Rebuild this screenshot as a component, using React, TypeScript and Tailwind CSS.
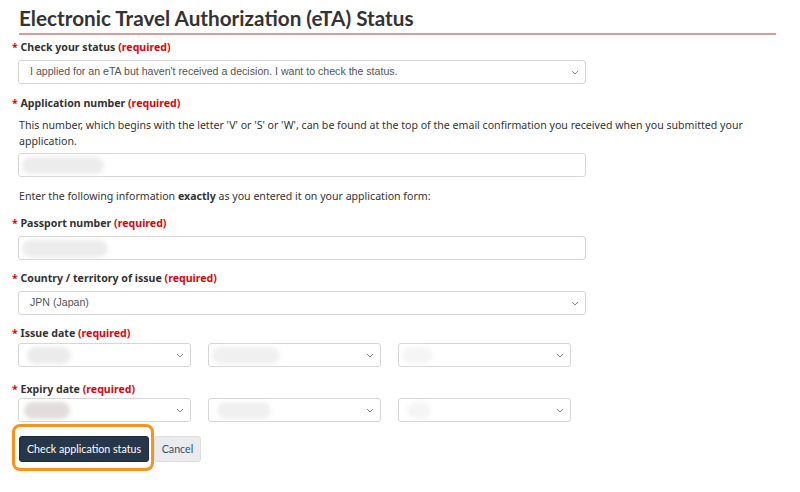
import React from 'react'

const Chevron = () => (
  <svg width="8" height="5" viewBox="0 0 8 5" className="shrink-0">
    <polyline points="1,1 4,4 7,1" fill="none" stroke="#8a8a8a" strokeWidth="1" />
  </svg>
)

function Label({ children }: { children: React.ReactNode }) {
  return (
    <div className="h-[18px] leading-[18px] text-[10.6px] font-bold text-[#333]">
      <span className="text-[#d3080c]">*</span> {children}{' '}
      <span className="text-[#d3080c]">(required)</span>
    </div>
  )
}

function Blur({ w, tone, ml = 'ml-[4px]' }: { w: string; tone: string; ml?: string }) {
  return <div className={`${ml} ${w} ${tone} h-[17px] rounded-full blur-[2px]`} />
}

function Select({ width, children }: { width: string; children?: React.ReactNode }) {
  return (
    <div
      className={`${width} h-[24px] flex items-center justify-between border border-[#d6d6d6] rounded-[3px] bg-white pr-[6px]`}
      style={{ fontFamily: '"Liberation Sans", Arial, sans-serif' }}
    >
      <div className="flex items-center text-[10.6px] text-[#555]">{children}</div>
      <Chevron />
    </div>
  )
}

export default function App() {
  return (
    <div
      className="w-[800px] h-[492px] bg-white pl-[12px] pr-[24px] text-[#333]"
      style={{ fontFamily: '"Noto Sans", "Open Sans", sans-serif' }}
    >
      <h1
        className="ml-[7px] pt-[3px] pb-[1px] h-[35px] leading-[30px] text-[20.7px] font-bold text-[#333] border-b-2 border-[#dc9a9e]"
        style={{ fontFamily: 'Lato, sans-serif' }}
      >
        Electronic Travel Authorization (eTA) Status
      </h1>

      <div className="mt-[3px]">
        <Label>Check your status</Label>
      </div>
      <div className="mt-[4px] ml-[6px]">
        <Select width="w-[568px]">
          <span className="pl-[11px]">I applied for an eTA but haven't received a decision. I want to check the status.</span>
        </Select>
      </div>

      <div className="mt-[10px]">
        <Label>Application number</Label>
      </div>
      <p className="mt-[5px] ml-[7px] text-[10.6px] leading-[16px] text-[#333]">
        This number, which begins with the letter 'V' or 'S' or 'W', can be found at the top of the email confirmation you received when you submitted your application.
      </p>
      <div className="mt-[4px] ml-[6px] w-[568px] h-[24px] flex items-center border border-[#d6d6d6] rounded-[3px]">
        <Blur w="w-[82px]" tone="bg-[#ececec]" ml="ml-[3px]" />
      </div>

      <p className="mt-[11px] ml-[7px] text-[10.6px] leading-[16px]">
        Enter the following information <b>exactly</b> as you entered it on your application form:
      </p>

      <div className="mt-[10px]">
        <Label>Passport number</Label>
      </div>
      <div className="mt-[4px] ml-[6px] w-[568px] h-[24px] flex items-center border border-[#d6d6d6] rounded-[3px]">
        <Blur w="w-[86px]" tone="bg-[#ececec]" ml="ml-[3px]" />
      </div>

      <div className="mt-[9px]">
        <Label>Country / territory of issue</Label>
      </div>
      <div className="mt-[4px] ml-[6px]">
        <Select width="w-[568px]">
          <span className="pl-[11px]">JPN (Japan)</span>
        </Select>
      </div>

      <div className="mt-[9px]">
        <Label>Issue date</Label>
      </div>
      <div className="mt-[1px] ml-[6px] flex gap-[17px]">
        <Select width="w-[173px]">
          <Blur w="w-[44px]" tone="bg-[#ebebeb]" ml="ml-[8px]" />
        </Select>
        <Select width="w-[173px]">
          <Blur w="w-[68px]" tone="bg-[#f0f0f0]" ml="ml-[3px]" />
        </Select>
        <Select width="w-[173px]">
          <Blur w="w-[30px]" tone="bg-[#f5f5f5]" ml="ml-[3px]" />
        </Select>
      </div>

      <div className="mt-[13px]">
        <Label>Expiry date</Label>
      </div>
      <div className="mt-[0px] ml-[6px] flex gap-[17px]">
        <Select width="w-[173px]">
          <Blur w="w-[46px]" tone="bg-[#e2dcdc]" ml="ml-[5px]" />
        </Select>
        <Select width="w-[173px]">
          <Blur w="w-[54px]" tone="bg-[#f0f0f0]" ml="ml-[8px]" />
        </Select>
        <Select width="w-[173px]">
          <Blur w="w-[24px]" tone="bg-[#f5f5f5]" ml="ml-[8px]" />
        </Select>
      </div>

      <div className="relative mt-[14px] ml-[7px] flex items-start gap-[5px]" style={{ fontFamily: 'Lato, sans-serif' }}>
        <div className="absolute left-[-7px] top-[-12px] w-[142px] h-[47px] border-[3px] border-[#f7941d] rounded-[8px]" />
        <button className="relative w-[130px] h-[26px] bg-[#26374a] text-white text-[10.7px] rounded-[3px] border border-[#1c2a3a]">
          Check application status
        </button>
        <button className="w-[47px] h-[26px] bg-[#eaebed] text-[#335075] text-[10.7px] rounded-[3px] border border-[#dcdee1]">
          Cancel
        </button>
      </div>
    </div>
  )
}
